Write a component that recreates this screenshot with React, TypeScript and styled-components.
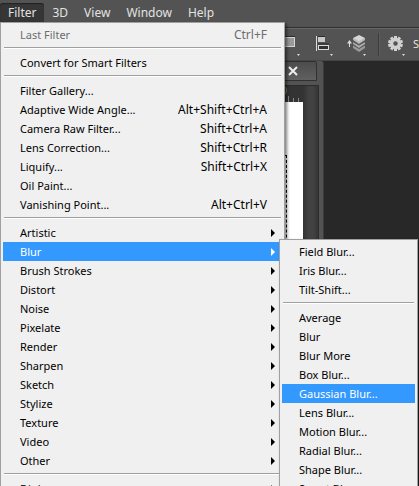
import React from "react";
import styled, { createGlobalStyle, css } from "styled-components";

const GlobalStyle = createGlobalStyle`
  * { box-sizing: border-box; }
  html, body { margin: 0; background: #282828; }
  button { font: inherit; color: inherit; border: 0; margin: 0; padding: 0; background: none; }
`;

const Screen = styled.div`
  min-height: 100vh;
  height: 100vh;
  overflow: hidden;
  display: flex;
  flex-direction: column;
  background: #282828;
  font: 11px/19px "Noto Sans", "Segoe UI", sans-serif;
`;

const MenuBar = styled.nav`
  display: flex;
  flex: none;
  padding: 3px 0 5px;
  background: #535353;
  color: #e3e3e3;
  position: relative;
  z-index: 2;
`;

const MenuSlot = styled.div`
  position: relative;
`;

const MenuTitle = styled.button<{ $open?: boolean }>`
  display: block;
  height: 19px;
  padding: 0 8px;
  font-size: 12px;
  ${(p) => p.$open && css`
    background: #363636;
    border-radius: 3px 3px 0 0;
    box-shadow: inset 0 1px 1px #222;
  `}
`;

const Menu = styled.div`
  position: absolute;
  top: 19px;
  left: 0;
  width: 285px;
  padding: 2px;
  border: 1px solid #a0a0a0;
  background: #f0f0f0;
  color: #000;
  box-shadow: 2px 2px 3px rgba(0, 0, 0, 0.5);
`;

const SubMenu = styled(Menu)`
  top: -3px;
  left: 276px;
  width: 139px;
`;

const ItemWrap = styled.div`
  position: relative;
`;

const Item = styled.button<{ $active?: boolean; $off?: boolean }>`
  display: flex;
  align-items: center;
  width: 100%;
  height: 19px;
  padding: 0 7px 0 17px;
  white-space: nowrap;
  text-align: left;
  background: ${(p) => (p.$active ? "#3399ff" : "transparent")};
  color: ${(p) => (p.$active ? "#fff" : p.$off ? "#6d6d6d" : "#000")};
`;

const Shortcut = styled.span`
  margin-left: auto;
  padding-right: 8px;
  font-size: 12px;
`;

const Arrow = styled.svg`
  margin-left: auto;
  flex: none;
`;

const Separator = styled.hr`
  height: 2px;
  margin: 3px 1px 4px;
  border: 0;
  border-top: 1px solid #a0a0a0;
  background: #fff;
`;

const OptionsBar = styled.div`
  display: flex;
  flex: none;
  height: 34px;
  padding-left: 284px;
  border-top: 1px solid #303030;
  border-bottom: 1px solid #454545;
  box-shadow: inset 0 1px #686868;
  background: #535353;
  color: #e3e3e3;
`;

const Tool = styled.button<{ $width: number }>`
  flex: none;
  width: ${(p) => p.$width}px;
  height: 32px;
`;

const Divider = styled.div`
  flex: none;
  width: 2px;
  height: 23px;
  margin: 5px 8px 0 7px;
  background: #3c3c3c;
  border-right: 1px solid #5c5c5c;
`;

const OptionText = styled.span`
  padding: 6px 0 0 5px;
  white-space: nowrap;
`;

const Workspace = styled.main`
  flex: 1;
  min-height: 0;
  display: flex;
`;

const Doc = styled.section`
  flex: none;
  width: 324px;
  display: flex;
  flex-direction: column;
  background: #535353;
  border-right: 1px solid #3c3c3c;
  border-radius: 0 3px 0 0;
`;

const Tab = styled.div`
  display: flex;
  justify-content: flex-end;
  align-items: center;
  height: 20px;
  margin: 0 6px 4px 0;
  padding-right: 17px;
  background: linear-gradient(#4c4c4c, #606060);
  border: 1px solid #303030;
  border-radius: 0 2px 0 0;
`;

const Close = styled.button`
  width: 12px;
  height: 12px;
  svg { display: block; }
`;

const DocBody = styled.div`
  flex: 1;
  display: flex;
  margin-right: 4px;
  border-top: 1px solid #2c2c2c;
  border-right: 1px solid #2c2c2c;
  background: linear-gradient(90deg, #333 303px, #424242 309px, #424242 313px, #333 319px);
`;

const Page = styled.div`
  width: 303px;
  display: flex;
  flex-direction: column;
`;

const Ruler = styled.svg`
  align-self: flex-end;
  flex: none;
  background: #333;
`;

const Canvas = styled.div`
  flex: 1;
  background: #fff;
  padding: 53px 16px 0 0;
`;

const Selection = styled.div`
  height: 100%;
  border-top: 1px dashed #000;
  border-right: 1px dashed #000;
`;

const COMMANDS: [string, string?][] = [
  ["Filter Gallery..."],
  ["Adaptive Wide Angle...", "Alt+Shift+Ctrl+A"],
  ["Camera Raw Filter...", "Shift+Ctrl+A"],
  ["Lens Correction...", "Shift+Ctrl+R"],
  ["Liquify...", "Shift+Ctrl+X"],
  ["Oil Paint..."],
  ["Vanishing Point...", "Alt+Ctrl+V"],
];
const GROUPS = ["Artistic", "Blur", "Brush Strokes", "Distort", "Noise", "Pixelate", "Render", "Sharpen", "Sketch", "Stylize", "Texture", "Video", "Other"];
const BLURS = ["Average", "Blur", "Blur More", "Box Blur...", "Gaussian Blur...", "Lens Blur...", "Motion Blur...", "Radial Blur...", "Shape Blur...", "Smart Blur..."];

const Chevron = () => (
  <Arrow width="4" height="8" viewBox="0 0 4 8"><path d="M0 0L4 4L0 8Z" fill="currentColor" /></Arrow>
);

const Group = ({ label, active, children }: { label: string; active?: boolean; children?: React.ReactNode }) => (
  <ItemWrap>
    <Item $active={active} aria-haspopup="menu">{label}<Chevron /></Item>
    {children}
  </ItemWrap>
);

const GEAR_TEETH = Array.from({ length: 10 }, (_, i) => i * 36);

export default function App() {
  return (
    <Screen>
      <GlobalStyle />
      <MenuBar>
        <MenuSlot>
          <MenuTitle $open>Filter</MenuTitle>
          <Menu>
            <Item $off disabled>Last Filter<Shortcut>Ctrl+F</Shortcut></Item>
            <Separator />
            <Item>Convert for Smart Filters</Item>
            <Separator />
            {COMMANDS.map(([label, keys]) => (
              <Item key={label}>{label}{keys && <Shortcut>{keys}</Shortcut>}</Item>
            ))}
            <Separator />
            {GROUPS.map((label) => (
              <Group key={label} label={label} active={label === "Blur"}>
                {label === "Blur" && (
                  <SubMenu>
                    <Item>Field Blur...</Item>
                    <Item>Iris Blur...</Item>
                    <Item>Tilt-Shift...</Item>
                    <Separator />
                    {BLURS.map((b) => <Item key={b} $active={b === "Gaussian Blur..."}>{b}</Item>)}
                  </SubMenu>
                )}
              </Group>
            ))}
            <Separator />
            <Group label="Digimarc" />
          </Menu>
        </MenuSlot>
        <MenuTitle>3D</MenuTitle>
        <MenuTitle>View</MenuTitle>
        <MenuTitle>Window</MenuTitle>
        <MenuTitle>Help</MenuTitle>
      </MenuBar>
      <OptionsBar>
        <Tool $width={22} aria-label="Path operations">
          <svg width="22" height="32" viewBox="0 0 22 32">
            <path d="M0 8.500h11" stroke="#2a2a2a" />
            <rect x="-4" y="9.500" width="14.500" height="9" fill="#999" stroke="#d4d4d4" />
            <path d="M13 26h3l-1.500 2z" fill="#ddd" />
          </svg>
        </Tool>
        <Tool $width={34} aria-label="Path alignment">
          <svg width="34" height="32" viewBox="0 0 34 32">
            <path d="M12 8.500h7M12 16h11" stroke="#2a2a2a" />
            <path d="M10.500 8v15" stroke="#dcdcdc" />
            <rect x="12" y="9" width="7" height="5" fill="#c8c8c8" />
            <rect x="12.500" y="17.500" width="10" height="4" fill="#333" stroke="#dcdcdc" />
            <path d="M24 26h3l-1.500 2z" fill="#ddd" />
          </svg>
        </Tool>
        <Tool $width={31} aria-label="Path arrangement">
          <svg width="31" height="32" viewBox="0 0 31 32">
            <path d="M9.500 19v-5" stroke="#ddd" />
            <path d="M7 15.500l2.500-3.500 2.500 3.500z" fill="#ddd" />
            <path d="M13 17l6 3 6-3v3l-6 4-6-4z" fill="#999" />
            <path d="M13 17l6 3.500 6-3.500" fill="none" stroke="#555" />
            <path d="M13 14l6 3 6-3v2l-6 4-6-4z" fill="#aaa" />
            <path d="M13 13.500l6 3.500 6-3.500" fill="none" stroke="#555" />
            <path d="M13 10l6 3 6-3v2l-6 4-6-4z" fill="#bbb" />
            <path d="M13 10l6-3 6 3-6 3.500z" fill="#d6d6d6" />
            <path d="M23 26h3l-1.500 2z" fill="#ddd" />
          </svg>
        </Tool>
        <Divider />
        <Tool $width={20} aria-label="Settings">
          <svg width="20" height="32" viewBox="0 0 20 32">
            {GEAR_TEETH.map((a) => (
              <rect key={a} x="6" y="8" width="3" height="4" fill="#d0d0d0" transform={`rotate(${a} 7.500 15.500)`} />
            ))}
            <circle cx="7.500" cy="15.500" r="4" fill="none" stroke="#d0d0d0" strokeWidth="3.500" />
            <path d="M14 26h3l-1.500 2z" fill="#ddd" />
          </svg>
        </Tool>
        <OptionText>Show</OptionText>
      </OptionsBar>
      <Workspace>
        <Doc>
          <Tab>
            <Close aria-label="Close document">
              <svg width="12" height="12" viewBox="0 0 12 12">
                <path d="M2 2l8 8M10 2l-8 8" stroke="#eee" strokeWidth="2" />
              </svg>
            </Close>
          </Tab>
          <DocBody>
            <Page>
              <Ruler width="303" height="16" viewBox="0 0 303 16">
                <path d="M288.500 10v6M293.500 12v4M298.500 12v4" stroke="#888" />
                <text x="282" y="8" fontSize="9" fill="#998a70">0</text>
              </Ruler>
              <Canvas><Selection /></Canvas>
            </Page>
          </DocBody>
        </Doc>
      </Workspace>
    </Screen>
  );
}
